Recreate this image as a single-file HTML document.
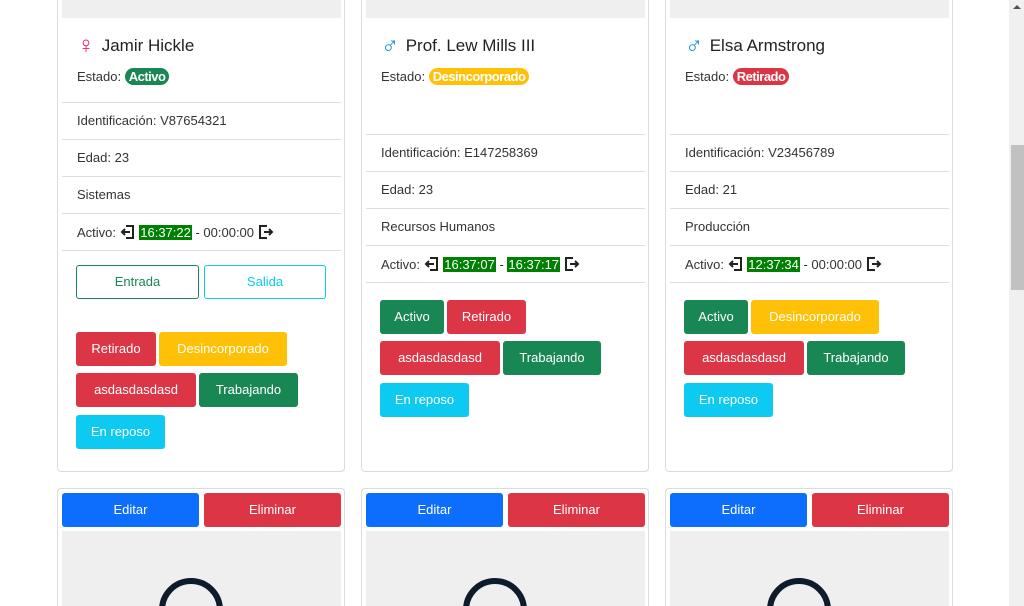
<!DOCTYPE html><html style="overflow:hidden"><head><meta charset="utf-8"><style>
*{box-sizing:border-box;margin:0;padding:0}
html,body{width:1024px;height:606px;overflow:hidden}
body{background:#fff;font-family:"Liberation Sans",sans-serif;color:#212529;position:relative}
.card{position:absolute;width:288px;border:1px solid #dcdcdc;border-radius:4px;background:#fff}
.a{position:absolute;white-space:nowrap}
.hd{position:absolute;left:4px;width:279px;background:#efefef}
.dv{position:absolute;left:4px;width:279px;height:1px;background:#dedede}
.nm{font-size:17px;color:#222}
.sg{display:inline-block;width:20px;font-size:24px;line-height:17px;vertical-align:-2px;font-weight:bold}
.t{font-size:13px;color:#333}
.pill{display:inline-block;color:#fff;font-weight:bold;font-size:13px;border-radius:10px;padding:1px 4px;letter-spacing:-0.5px}
.tm{background:#008000;color:#fff;padding:0 1px}
.b{position:absolute;height:34px;border-radius:3px;color:#fff;font-size:13px;line-height:34px;text-align:center}
.g{background:#198754}.r{background:#dc3545}.y{background:#ffc107}.c{background:#0dcaf0}.bl{background:#0d6efd}
svg.i{vertical-align:-3px}
</style></head><body>
<svg width="0" height="0" style="position:absolute"><defs>
<g id="in"><path d="M6 2H13V14H6" fill="none" stroke="#222" stroke-width="2"/><path d="M2 8H10M5 5L2 8L5 11" fill="none" stroke="#222" stroke-width="2"/></g>
<g id="out"><path d="M9 2H2V14H9" fill="none" stroke="#222" stroke-width="2"/><path d="M6 8H14M11 5L14 8L11 11" fill="none" stroke="#222" stroke-width="2"/></g>
</defs></svg>

<div class="card" style="left:57px;top:-11px;height:483px">
<div class="hd" style="top:0;height:28px"></div>
<div class="a nm" style="left:19px;top:46px"><span class="sg" style="color:#e8207a">♀</span>&nbsp;Jamir Hickle</div>
<div class="a t" style="left:19px;top:78px">Estado: <span class="pill g">Activo</span></div>
<div class="dv" style="top:112px"></div>
<div class="a t" style="left:19px;top:123px">Identificación: V87654321</div>
<div class="dv" style="top:149px"></div>
<div class="a t" style="left:19px;top:160px">Edad: 23</div>
<div class="dv" style="top:186px"></div>
<div class="a t" style="left:19px;top:197px">Sistemas</div>
<div class="dv" style="top:223px"></div>
<div class="a t" style="left:19px;top:234px">Activo: <svg class="i" width="16" height="16"><use href="#in"/></svg> <span class="tm">16:37:22</span> - 00:00:00 <svg class="i" width="16" height="16"><use href="#out"/></svg></div>
<div class="dv" style="top:260px"></div>
<div class="b" style="left:18px;top:275px;width:123px;border:1px solid #198754;color:#198754;line-height:32px">Entrada</div>
<div class="b" style="left:146px;top:275px;width:122px;border:1px solid #0dcaf0;color:#0dcaf0;line-height:32px">Salida</div>
<div class="b r" style="left:18px;top:342px;width:80px">Retirado</div>
<div class="b y" style="left:101px;top:342px;width:128px">Desincorporado</div>
<div class="b r" style="left:18px;top:383px;width:120px">asdasdasdasd</div>
<div class="b g" style="left:141px;top:383px;width:99px">Trabajando</div>
<div class="b c" style="left:18px;top:425px;width:89px">En reposo</div>
</div>

<div class="card" style="left:361px;top:-11px;height:483px">
<div class="hd" style="top:0;height:28px"></div>
<div class="a nm" style="left:19px;top:46px"><span class="sg" style="color:#0d8ee8">♂</span>&nbsp;Prof. Lew Mills III</div>
<div class="a t" style="left:19px;top:78px">Estado: <span class="pill y">Desincorporado</span></div>
<div class="dv" style="top:144px"></div>
<div class="a t" style="left:19px;top:155px">Identificación: E147258369</div>
<div class="dv" style="top:181px"></div>
<div class="a t" style="left:19px;top:192px">Edad: 23</div>
<div class="dv" style="top:218px"></div>
<div class="a t" style="left:19px;top:229px">Recursos Humanos</div>
<div class="dv" style="top:255px"></div>
<div class="a t" style="left:19px;top:266px">Activo: <svg class="i" width="16" height="16"><use href="#in"/></svg> <span class="tm">16:37:07</span> - <span class="tm">16:37:17</span> <svg class="i" width="16" height="16"><use href="#out"/></svg></div>
<div class="dv" style="top:292px"></div>
<div class="b g" style="left:18px;top:310px;width:64px">Activo</div>
<div class="b r" style="left:85px;top:310px;width:79px">Retirado</div>
<div class="b r" style="left:18px;top:351px;width:120px">asdasdasdasd</div>
<div class="b g" style="left:141px;top:351px;width:98px">Trabajando</div>
<div class="b c" style="left:18px;top:393px;width:89px">En reposo</div>
</div>

<div class="card" style="left:665px;top:-11px;height:483px">
<div class="hd" style="top:0;height:28px"></div>
<div class="a nm" style="left:19px;top:46px"><span class="sg" style="color:#0d8ee8">♂</span>&nbsp;Elsa Armstrong</div>
<div class="a t" style="left:19px;top:78px">Estado: <span class="pill r">Retirado</span></div>
<div class="dv" style="top:144px"></div>
<div class="a t" style="left:19px;top:155px">Identificación: V23456789</div>
<div class="dv" style="top:181px"></div>
<div class="a t" style="left:19px;top:192px">Edad: 21</div>
<div class="dv" style="top:218px"></div>
<div class="a t" style="left:19px;top:229px">Producción</div>
<div class="dv" style="top:255px"></div>
<div class="a t" style="left:19px;top:266px">Activo: <svg class="i" width="16" height="16"><use href="#in"/></svg> <span class="tm">12:37:34</span> - 00:00:00 <svg class="i" width="16" height="16"><use href="#out"/></svg></div>
<div class="dv" style="top:292px"></div>
<div class="b g" style="left:18px;top:310px;width:64px">Activo</div>
<div class="b y" style="left:85px;top:310px;width:128px">Desincorporado</div>
<div class="b r" style="left:18px;top:351px;width:120px">asdasdasdasd</div>
<div class="b g" style="left:141px;top:351px;width:98px">Trabajando</div>
<div class="b c" style="left:18px;top:393px;width:89px">En reposo</div>
</div>

<div class="card" style="left:57px;top:488px;height:118px;border-bottom:none;border-radius:4px 4px 0 0">
<div class="b bl" style="left:4px;top:4px;width:137px">Editar</div>
<div class="b r" style="left:146px;top:4px;width:137px">Eliminar</div>
<div class="hd" style="top:42px;height:76px"></div>
<div class="a" style="left:101px;top:89px;width:64px;height:64px;border:6px solid #0d1b2a;border-radius:50%;clip-path:inset(0 0 35px 0)"></div>
</div>
<div class="card" style="left:361px;top:488px;height:118px;border-bottom:none;border-radius:4px 4px 0 0">
<div class="b bl" style="left:4px;top:4px;width:137px">Editar</div>
<div class="b r" style="left:146px;top:4px;width:137px">Eliminar</div>
<div class="hd" style="top:42px;height:76px"></div>
<div class="a" style="left:101px;top:89px;width:64px;height:64px;border:6px solid #0d1b2a;border-radius:50%;clip-path:inset(0 0 35px 0)"></div>
</div>
<div class="card" style="left:665px;top:488px;height:118px;border-bottom:none;border-radius:4px 4px 0 0">
<div class="b bl" style="left:4px;top:4px;width:137px">Editar</div>
<div class="b r" style="left:146px;top:4px;width:137px">Eliminar</div>
<div class="hd" style="top:42px;height:76px"></div>
<div class="a" style="left:101px;top:89px;width:64px;height:64px;border:6px solid #0d1b2a;border-radius:50%;clip-path:inset(0 0 35px 0)"></div>
</div>

<div class="a" style="left:1009px;top:0;width:15px;height:606px;background:#f0f0f0"></div>
<div class="a" style="left:1011px;top:145px;width:13px;height:145px;background:#c1c1c1"></div>
<div class="a" style="left:1013px;top:5px;width:0;height:0;border-left:4px solid transparent;border-right:4px solid transparent;border-bottom:4px solid #505050"></div>
</body></html>
